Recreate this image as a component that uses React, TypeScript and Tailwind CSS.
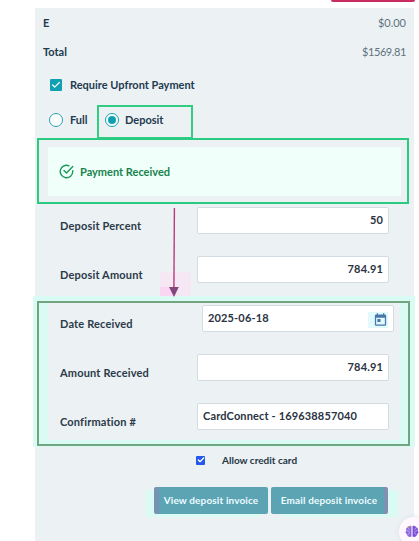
import { Check } from "lucide-react";

interface Field {
  label: string;
  value: string;
  align: "left" | "right";
  date?: boolean;
}

const fields: Field[] = [
  { label: "Deposit Percent", value: "50", align: "right" },
  { label: "Deposit Amount", value: "784.91", align: "right" },
  { label: "Date Received", value: "2025-06-18", align: "left", date: true },
  { label: "Amount Received", value: "784.91", align: "right" },
  { label: "Confirmation #", value: "CardConnect - 169638857040", align: "left" },
];

function CalendarIcon() {
  return (
    <svg viewBox="0 0 24 24" className="h-[15px] w-[15px]" fill="#4777ad">
      <path d="M19 4h-1V2h-2v2H8V2H6v2H5a2 2 0 0 0-2 2v14a2 2 0 0 0 2 2h14a2 2 0 0 0 2-2V6a2 2 0 0 0-2-2zm0 16H5V9h14v11zM7 11h5v5H7z" />
    </svg>
  );
}

function CheckCircleIcon() {
  return (
    <svg
      viewBox="0 0 24 24"
      className="h-[15px] w-[15px]"
      fill="none"
      stroke="#169a5b"
      strokeWidth="2.2"
      strokeLinecap="round"
      strokeLinejoin="round"
    >
      <path d="M22 10.8V12a10 10 0 1 1-6-9.1" />
      <path d="M22 4 12 14.5l-4-4" />
    </svg>
  );
}

function BrainIcon() {
  return (
    <svg viewBox="0 0 26 24" className="h-[13px] w-[14px]">
      <path
        d="M12 2C9 0 6 2 5.5 4 2.5 4.5 1 8 2.5 10 0 12 1 16 3.5 17 4 21 8 23 12 21.5z"
        fill="#8b68dc"
      />
      <path
        d="M14 2c3-2 6 0 6.500 2C23.5 4.5 25 8 23.5 10 26 12 25 16 22.5 17 22 21 18 23 14 21.5z"
        fill="#7950d5"
      />
      <path
        d="M6 5c0 2 1 3 3 3M3 11c3-1 5 0 5 3M5 17c2 0 3-1 3-2M20 5c0 2-1 3-3 3M23 11c-3-1-5 0-5 3M21 17c-2 0-3-1-3-2"
        fill="none"
        stroke="#d9c8ff"
        strokeWidth="1.3"
      />
      <path d="M5 5c1-2 3-3 5-2" fill="none" stroke="#c9a566" strokeWidth="2" />
    </svg>
  );
}

function FieldRow({ field }: { field: Field }) {
  return (
    <div className="flex h-[27px] items-start">
      <label className="mt-[11px] block text-[11px] leading-4 font-bold tracking-[0.17px] whitespace-nowrap text-[#2b3a49]">
        {field.label}
      </label>
      <div
        className={`ml-auto flex h-[27px] w-[192px] items-center rounded-[2px] border border-[#d5dce1] bg-white px-[5px] text-[11px] font-bold tracking-[0.15px] text-[#2a3342] ${
          field.date ? "mr-[20px]" : "mr-[25px]"
        } ${field.align === "right" ? "justify-end" : "justify-between"}`}
      >
        <span className="block whitespace-nowrap">{field.value}</span>
        {field.date && (
          <span className="mt-[2px] flex h-[16px] w-[20px] items-center justify-end bg-[#e2fafb]">
            <CalendarIcon />
          </span>
        )}
      </div>
    </div>
  );
}

export default function App() {
  return (
    <div className="relative h-[541px] w-[419px] overflow-hidden bg-white font-['Lato',sans-serif] text-[11px]">
      <div className="ml-[331px] h-[8px] w-[84px]">
        <div className="h-[1.5px] rounded-b bg-[#c92c62]" />
      </div>

      <main className="ml-[35px] h-[533px] w-[379px] bg-[#ecf1f4] text-[#1d3a4f]">
        {/* Totals */}
        <div className="flex h-[31px] items-center justify-between pr-[8px] pl-[8px]">
          <span className="font-bold">E</span>
          <span className="text-[#60727f]">$0.00</span>
        </div>
        <div className="flex h-[26px] items-center justify-between pr-[8px] pl-[8px]">
          <span className="font-bold">Total</span>
          <span className="tracking-[-0.4px] text-[#60727f]">$1569.81</span>
        </div>

        {/* Payment options */}
        <div className="mt-[12px] flex h-[16px] items-center pl-[15px]">
          <span className="flex h-[12px] w-[12px] items-center justify-center rounded-[1px] bg-[#119fb2]">
            <Check className="h-[10px] w-[10px] text-white" strokeWidth={3} />
          </span>
          <span className="ml-[8px] font-bold whitespace-nowrap">Require Upfront Payment</span>
        </div>
        <div className="mt-[19px] flex h-[16px] items-center pl-[14px]">
          <span className="h-[14px] w-[14px] rounded-full border-[1.5px] border-[#25a0b1] bg-white" />
          <span className="ml-[7px] w-[35px] font-bold">Full</span>
          <span className="flex h-[14px] w-[14px] items-center justify-center rounded-full border-[1.5px] border-[#149eb0] bg-white">
            <span className="h-[8px] w-[8px] rounded-full bg-[#119fb2]" />
          </span>
          <span className="ml-[6px] font-bold">Deposit</span>
        </div>

        <div className="mt-[19px] ml-[13px] flex h-[49px] w-[353px] items-center bg-[#f0fff9] pl-[11px] text-[#16834d]">
          <CheckCircleIcon />
          <span className="mt-px ml-[6px] font-bold">Payment Received</span>
        </div>

        <div className="mt-[11px] flex flex-col gap-[22px] pl-[25px]">
          {fields.map((field) => (
            <FieldRow key={field.label} field={field} />
          ))}
        </div>

        <div className="mt-[22px] flex h-[16px] items-center pl-[161px] text-[10px] text-[#263645]">
          <span className="flex h-[9px] w-[9px] items-center justify-center rounded-[1px] bg-[#2458ed]">
            <Check className="h-[8px] w-[8px] text-white" strokeWidth={4} />
          </span>
          <span className="ml-[17px] font-bold">Allow credit card</span>
        </div>

        <div className="mt-[19px] flex gap-[3px] pl-[119px] text-[10px] font-bold tracking-[0.13px] text-[#edfdff]">
          <button className="h-[27px] w-[114px] rounded-[2px] border-l-[5px] border-[#7793b4] bg-[#5ca3b4] pr-[5px] whitespace-nowrap shadow-[-8px_3px_0_#d9fbf3]">
            View deposit invoice
          </button>
          <button className="h-[27px] w-[117px] rounded-[2px] border-r-[4px] border-[#8090b2] bg-[#5ca3b4] pl-[3px] whitespace-nowrap shadow-[10px_3px_0_#d9fbf3]">
            Email deposit invoice
          </button>
        </div>
      </main>

      {/* Callouts */}
      <div className="absolute top-[105px] left-[97px] h-[34px] w-[96px] border-2 border-[#32cd82]" />
      <div className="absolute top-[138px] left-[37px] h-[66px] w-[372px] border-2 border-[#28cb80]" />
      <div className="absolute top-[296px] left-[33px] h-[151px] w-[382px] border-x-[15px] border-t-[7px] border-b-[7px] border-[#d9fbf3]" />
      <div className="absolute top-[301px] left-[37px] h-[145px] w-[373px] border-2 border-[#70a580]" />
      <div className="absolute top-[272px] left-[160px] flex h-[24px] w-[31px] items-end bg-[#f5e8f4]">
        <div className="h-[9px] w-[14px] bg-[#fbd6f2]" />
      </div>
      <svg className="absolute top-[207px] left-[166px] h-[91px] w-[16px]" viewBox="0 0 16 91">
        <path d="M8.4 1 7.9 82" stroke="#bd397d" strokeWidth="1.4" />
        <path d="M3 80h9.800L8 90z" fill="#84477d" />
      </svg>

      <div className="absolute top-[517px] left-[399px] flex h-[29px] w-[29px] items-center rounded-full bg-[#fff9ff] pl-[6px] shadow-[0_0_5px_#dce1e7]">
        <BrainIcon />
      </div>
    </div>
  );
}
